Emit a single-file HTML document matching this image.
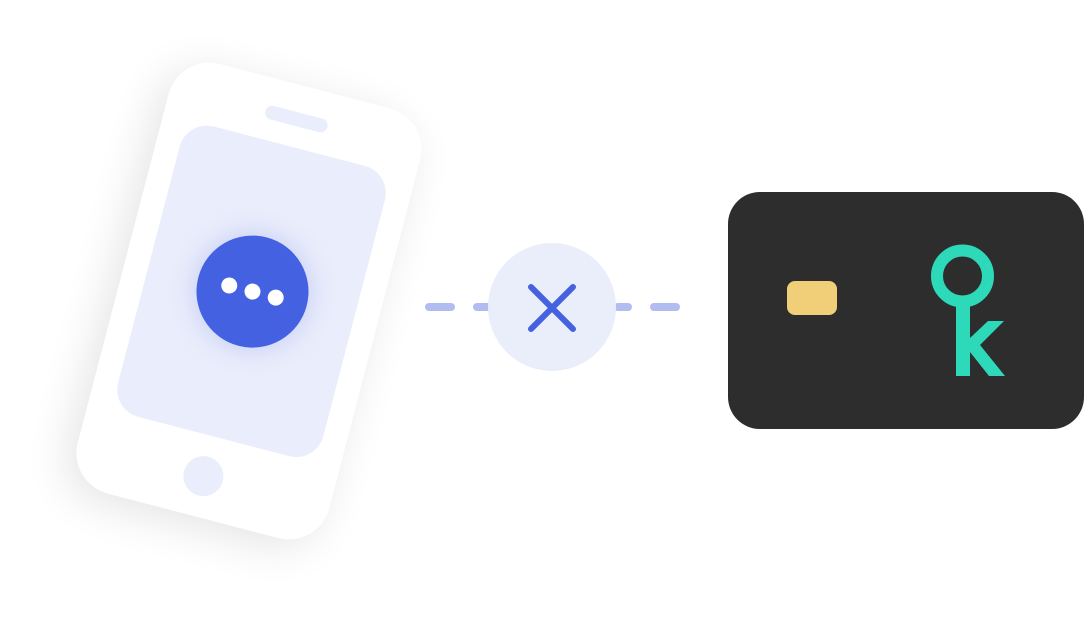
<!DOCTYPE html>
<html><head><meta charset="utf-8"><style>
html,body{margin:0;padding:0;background:#fff;width:1084px;height:622px;overflow:hidden;font-family:"Liberation Sans",sans-serif}
</style></head><body>
<svg width="1084" height="622" viewBox="0 0 1084 622" xmlns="http://www.w3.org/2000/svg">
<defs>
<filter id="sh" x="-50%" y="-50%" width="200%" height="200%"><feGaussianBlur stdDeviation="22"/></filter>
<filter id="sh2" x="-50%" y="-50%" width="200%" height="200%"><feGaussianBlur stdDeviation="14"/></filter>
</defs>
<g transform="translate(249,301) rotate(14.6)">
<rect x="-130" y="-222" width="260" height="444" rx="42" fill="#000" opacity="0.10" filter="url(#sh)" transform="translate(-8,10)"/>
<rect x="-130" y="-222" width="260" height="444" rx="42" fill="#fff"/>
<rect x="-106" y="-160" width="212" height="300" rx="28" fill="#eaedfb"/>
<rect x="-32" y="-195" width="64" height="14" rx="7" fill="#eaedfb"/>
<circle cx="0" cy="181" r="20" fill="#eaedfb"/>
<circle cx="1" cy="-10" r="56" fill="#4361e0" opacity="0.25" filter="url(#sh2)"/>
<circle cx="1" cy="-10" r="56" fill="#4361e0"/>
<circle cx="-23" cy="-10" r="8" fill="#fff"/>
<circle cx="1" cy="-10" r="8" fill="#fff"/>
<circle cx="25" cy="-10" r="8" fill="#fff"/>
</g>
<g stroke="#b3bcf0" stroke-width="8" stroke-linecap="round">
<line x1="429" y1="307" x2="451" y2="307"/>
<line x1="477" y1="307" x2="492" y2="307"/>
<line x1="618" y1="307" x2="628" y2="307"/>
<line x1="654" y1="307" x2="676" y2="307"/>
</g>
<circle cx="552" cy="307" r="64" fill="#eaeefb"/>
<g stroke="#4361e0" stroke-width="6" stroke-linecap="round">
<line x1="531" y1="287" x2="573" y2="329"/>
<line x1="573" y1="287" x2="531" y2="329"/>
</g>
<rect x="728" y="192" width="356" height="237" rx="32" fill="#2d2d2d"/>
<rect x="787" y="281" width="50" height="34" rx="8" fill="#f0cf78"/>
<circle cx="962.5" cy="276" r="25.5" fill="none" stroke="#2dd9b9" stroke-width="12"/>
<rect x="956" y="300" width="14" height="76" fill="#2dd9b9"/>
<polygon points="970,338 988,321 1004,321 980,345 1005,376 989,376 970,352" fill="#2dd9b9"/>
</svg>
</body></html>
